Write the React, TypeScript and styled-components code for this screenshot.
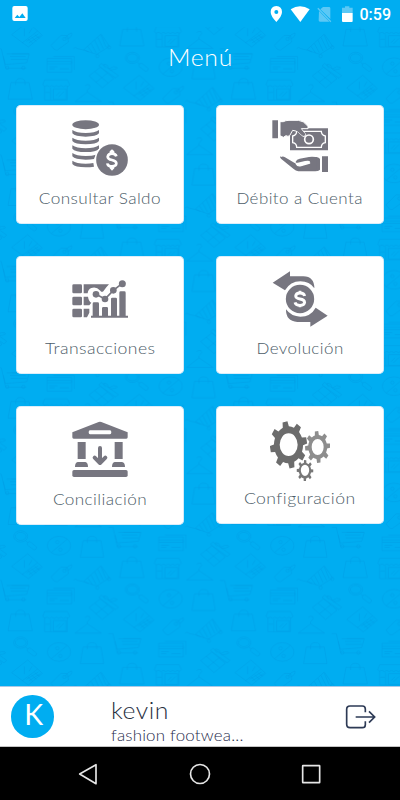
import React from "react";
import styled, { createGlobalStyle } from "styled-components";

const GlobalStyle = createGlobalStyle`
  * { box-sizing: border-box; }
  html, body { margin: 0; padding: 0; background: #00adf1; }
  body { font-family: Lato, "Open Sans", sans-serif; }
  svg { display: block; }
`;

const Screen = styled.div`
  position: relative;
  display: flex;
  flex-direction: column;
  width: 400px;
  height: 800px;
  overflow: hidden;
  background: #00adf1;
`;

const Wallpaper = styled.svg`
  position: absolute;
  top: 27px;
  left: 0;
`;

const StatusBar = styled.header`
  position: relative;
  height: 27px;
  display: flex;
  align-items: center;
  justify-content: space-between;
`;

const Clock = styled.span`
  margin-left: 6px;
  font: 500 16px/27px Roboto, sans-serif;
  color: #fff;
`;

const StatusGroup = styled.div`
  display: flex;
  align-items: center;
  padding: 1px 9px 0 0;
`;

const Stretch = styled.span<{ $x: number; $left?: boolean }>`
  display: inline-block;
  transform: scaleX(${(p) => p.$x});
  transform-origin: ${(p) => (p.$left ? "left" : "center")} center;
  white-space: nowrap;
`;

const Title = styled.h1`
  position: relative;
  margin: 0;
  height: 78px;
  padding: 15px 0 0;
  text-align: center;
  font-size: 22.5px;
  line-height: 32px;
  font-weight: 300;
  color: #fff;
  letter-spacing: 0.6px;
`;

const Menu = styled.main`
  position: relative;
  flex: 1;
  display: grid;
  grid-template-columns: 167.5px 167.5px;
  grid-template-rows: 118.5px 117.5px 118.5px;
  column-gap: 32.5px;
  row-gap: 32.5px;
  align-items: start;
  padding: 0.3px 0 0 16.2px;
`;

const Card = styled.button<{ $h: number }>`
  display: flex;
  flex-direction: column;
  align-items: center;
  height: ${(p) => p.$h}px;
  padding: 10.3px 0 0;
  border: 0;
  border-radius: 5px;
  background: #fff;
  box-shadow: inset 0 0 0 0.6px #b5dcf5;
  font-family: inherit;
`;

const CardIcon = styled.svg`
  width: 60px;
  height: 64px;
  flex: none;
`;

const CardLabel = styled.span<{ $gap: number }>`
  margin-top: ${(p) => p.$gap}px;
  font-size: 16px;
  line-height: 20px;
  font-weight: 300;
  color: #4c5c68;
  letter-spacing: 0.4px;
`;

const Account = styled.footer`
  position: relative;
  display: flex;
  height: 61px;
  background: #fff;
  border-top: 1px solid #a9c9e6;
  border-bottom: 1px solid #c4c4c4;
  color: #27303e;
`;

const Avatar = styled.div`
  width: 42.5px;
  height: 42.5px;
  margin: 8px 0 0 11px;
  padding-left: 3px;
  border-radius: 50%;
  background: #00adf1;
  color: #fff;
  text-align: center;
  font-size: 28.5px;
  line-height: 38px;
`;

const Identity = styled.div`
  width: 232px;
  padding: 10px 0 0 57.5px;
  font-weight: 300;
`;

const UserName = styled.div`
  font-size: 22.5px;
  line-height: 28px;
  letter-spacing: 0.5px;
`;

const Shop = styled.div`
  font-size: 16px;
  line-height: 20px;
  letter-spacing: 0.2px;
  color: #1f2c4c;
`;

const ExitButton = styled.svg`
  margin: 15px 0 0 58px;
`;

const NavBar = styled.nav`
  position: relative;
  height: 53px;
  display: flex;
  align-items: center;
  justify-content: space-between;
  padding: 0 77px 0 77px;
  background: #000;
`;

const Motifs = () => (
  <>
    <g>
      <ellipse cx="62" cy="49" rx="21" ry="17" />
      <ellipse cx="62" cy="49" rx="16" ry="12" />
      <path d="M76 62l8 6M84 67q4-4 9 0l17 14q0 8-8 9l-20-15q-2-5 2-8z" />
    </g>
    <g>
      <ellipse cx="177" cy="77" rx="35" ry="28" />
      <path d="M202 57l-48 40" />
      <circle cx="172" cy="66" r="5" />
      <circle cx="181" cy="89" r="5" />
    </g>
    <path d="M249 62h54l8 50h-70zM262 69V60q0-11 14-11t14 11v9" />
    <g>
      <path d="M325 22h14l13 58h62M345 44l6 25 64-5 8-27h-68M370 37h52M365 45h47M367 54h49" />
      <circle cx="357" cy="79" r="5" />
      <circle cx="405" cy="79" r="5" />
    </g>
    <path d="M476 51h74v41h-74zM476 60h74v7h-74M483 76h24M483 82h16M514 82h28M495 45h63v40" />
    <path d="M602 103l34-26 40 34-34 28zM619 90l41 35M657 95l-35 28M631 73l8-7 51 36-8 8zM652 80q-12-11-3-12t13 14q14-10 23-5t-20 9" />
    <g>
      <path d="M35 139l48-38 44 40-42 35zM66 164l47-36M73 120v24M96 120l-9 15" />
      <path d="M79 159l36-22M86 164l35-22M84 152l15 14M94 146l15 13M104 139l14 11" />
    </g>
    <g>
      <path d="M153 171l30-30 19 1 3 19-33 24q-8 3-19-14zM203 151q14-5 12-17-10 1-21 17" />
      <circle cx="193" cy="152" r="5" />
    </g>
    <g>
      <path d="M220 181q5-8 13 0l17 4 53-48 25 37-38 24-40-13M252 184l14 7M263 174l14 20M273 165l15 28M284 155l15 33M293 147l17 34M302 139l16 37" />
      <circle cx="292" cy="203" r="5" />
      <circle cx="327" cy="177" r="5" />
    </g>
    <path d="M368 123h54l10 50h-73zM382 131v-8q0-12 14-12t14 12v8" />
    <path d="M469 134v42h68v-42M469 115h68l7 14q-3 9-12 3-6 8-14 0-6 8-14 0-6 8-14 0-6 8-14 0-8 6-13-2zM487 176v-38M495 142h38v32h-38zM503 163l12-12M510 167l17-17M471 153h14" />
    <path d="M560 180l37-28 42 28zM597 152q-3-7 4-10 7-6 2-12-8-3-13 3" />
  </>
);

const Background = () => (
  <Wallpaper width="400" height="660" viewBox="0 27 400 660" aria-hidden>
    <defs>
      <pattern
        id="shopping"
        width="670"
        height="319"
        patternUnits="userSpaceOnUse"
        patternTransform="translate(0 520) scale(.33333)"
      >
        <g fill="none" stroke="#009be3" strokeWidth="2.6" strokeOpacity=".55">
          <Motifs />
          <g transform="translate(-670 0)"><Motifs /></g>
          <g transform="translate(335 159.5)"><Motifs /></g>
          <g transform="translate(-335 159.5)"><Motifs /></g>
          <g transform="translate(335 -159.5)"><Motifs /></g>
          <g transform="translate(-335 -159.5)"><Motifs /></g>
        </g>
      </pattern>
    </defs>
    <rect y="27" width="400" height="660" fill="url(#shopping)" />
  </Wallpaper>
);

const GREY = "#777680";

const Coins = () => (
  <g fill={GREY}>
    <ellipse cx="227" cy="73" rx="40" ry="13.5" />
    {[0, 23, 46].map((d) => (
      <path key={d} transform={`translate(0 ${d})`} d="M187 89q12 9 40 9t40-9v10q-8 10-40 10t-40-10z" />
    ))}
    <path d="M187 158q12 9 40 9 20 0 31-4l-6 13q-11 2-25 2-32 0-40-10z" />
    <path d="M187 181q12 9 40 9 14 0 23-2l2 11q-11 2-25 2-32 0-40-10z" />
    <circle cx="306" cy="179" r="52" fill="#fff" />
    <circle cx="306" cy="179" r="47.5" />
    <path d="M319 168q-2-8-13-8t-13 9q0 7 13 10t13 10q0 9-13 9t-14-9" fill="none" stroke="#fff" strokeWidth="8" />
    <path d="M306 147l7 6v9h-14v-9zM306 211l7-7v-9h-14v9z" fill="#fff" />
  </g>
);

const CashHands = () => (
  <g fill={GREY}>
    <path d="M187 60h17v54h-17zM336 168h18v47h-18z" />
    <path d="M240 84h114v66H240z" />
    <path d="M260 93h74q0 12 12 14v20q-12 2-12 14h-74q0-12-12-14v-20q12-2 12-14z" fill="none" stroke="#fff" strokeWidth="4" />
    <circle cx="297" cy="117" r="13" fill="none" stroke="#fff" strokeWidth="5" />
    <path
      d="M210 64h10q7-4 17-4h28q15 0 29 18v7h-20l13 17q0 8-8 6l-17-15-14-3-9 16q-5 4-11 0l-8 5-10-5z"
      stroke="#fff"
      strokeWidth="3"
    />
    <path d="M266 79l18 20q2 9-7 6l-23-18z" />
    <path d="M213 170q6-3 12 1l34 20q4 8 14 5l24-7q5-3 2-7-5-2-14 0l-22 5q-6 2-6-3 3-8 12-9l28-5q8-2 20 0h3l7 5v30q-5 6-10 8h-52q-8-1-14-7l-38-31q-5-4-1-8z" />
    <path d="M319 171q9 1 11 5v32q-4 4-11 5z" />
    <path d="M259 191q4 8 14 5l26-8" fill="none" stroke="#fff" strokeWidth="4" strokeLinecap="round" />
  </g>
);

const TableChart = () => (
  <g fill={GREY}>
    <rect x="187" y="102" width="29" height="27" rx="4" />
    <rect x="187" y="139" width="29" height="26" rx="4" />
    <rect x="187" y="175" width="29" height="26" rx="4" />
    <path d="M221 102h76l-8 9-9 12q-5 4-9-2-13-14-27-8-10 4-11 16h-12zM221 139h13q2 14 10 18l-6 8h-17zM221 175h17v12l-7 14h-10z" />
    <path d="M248 160q0-4 4-4h11q4 0 4 4v36h9v-22q0-4 4-4h10q4 0 4 4v22h9v-50q0-4 4-4h10q4 0 4 4v50h7v-69q0-4 4-4h11q4 0 4 4v69h7v6H243v-6h5z" />
    <path d="M258 132l27 14 25-26 27-21" fill="none" stroke={GREY} strokeWidth="5" />
    <circle cx="258" cy="132" r="10" />
    <circle cx="285" cy="146" r="10" />
    <circle cx="310" cy="120" r="10" />
    <circle cx="337" cy="100" r="10.5" />
  </g>
);

const Refund = () => (
  <g fill={GREY}>
    <path d="M188 97l52-34v15h40q33 1 33 36-14-21-42-21-30 0-46 27z" />
    <path d="M353 196l-52 33v-14h-39q-35-3-34-38 16 22 43 22 31 0 46-27z" />
    <circle cx="270" cy="146" r="42.5" />
    <path d="M284 137q-2-9-14-9t-13 9q0 7 13 9t14 10q-1 9-14 9t-15-9" fill="none" stroke="#fff" strokeWidth="8.5" />
    <path d="M266 121h8v9h-8zM266 163h8v8h-8z" fill="#fff" />
  </g>
);

const Bank = () => (
  <g fill={GREY}>
    <path
      fillRule="evenodd"
      d="M187 96l79-31q4-2 8 0l79 31v15q0 4-4 4H191q-4 0-4-4zM240 90q-4 0-4 6t4 6h60q4 0 4-6t-4-6z"
    />
    <path d="M203 125h24v51h-24zM314 125h24v51h-24z" />
    <path d="M203 185h23q8 1 8 15h-39q0-14 8-15zM314 185h22q9 1 9 15h-39q0-14 8-15z" />
    <rect x="187" y="209" width="166" height="21" rx="5" />
    <path d="M270 143v44M254 172l16 16 16-16" fill="none" stroke={GREY} strokeWidth="12" strokeLinecap="round" strokeLinejoin="round" />
  </g>
);

const gearOutline = (cx: number, cy: number, rx: number, ry: number, phase: number, root: number) => {
  const points: string[] = [];
  const step = Math.PI / 4;
  for (let i = 0; i < 8; i++) {
    [[-0.27, root], [-0.17, 1], [0.17, 1], [0.27, root], [0.5, root]].forEach(([offset, r]) => {
      const a = phase + (i + offset) * step;
      points.push(`${(cx + Math.cos(a) * rx * r).toFixed(1)} ${(cy + Math.sin(a) * ry * r).toFixed(1)}`);
    });
  }
  return `M${points.join("L")}Z`;
};

const hole = (cx: number, cy: number, rx: number, ry: number) =>
  `M${cx - rx} ${cy}a${rx} ${ry} 0 1 0 ${rx * 2} 0a${rx} ${ry} 0 1 0 ${-rx * 2} 0Z`;

const Gears = () => (
  <g fillRule="evenodd">
    <path fill="#6c6c6c" d={gearOutline(235.5, 133.5, 56, 71, -0.19, 0.78) + hole(236, 133, 27, 34)} />
    <path fill="#8d8d8d" d={gearOutline(323, 140, 38, 48, -0.09, 0.75) + hole(323, 140, 18, 24)} />
    <path fill="#777" d={gearOutline(285, 211, 25, 32, 0.02, 0.74) + hole(285, 210, 12.5, 17)} />
  </g>
);

const items = [
  { label: "Consultar Saldo", icon: <Coins />, top: 47, h: 118.5, gap: 8, stretch: 1.073 },
  { label: "Débito a Cuenta", icon: <CashHands />, top: 47, h: 118.5, gap: 8, stretch: 1.06 },
  { label: "Transacciones", icon: <TableChart />, top: 50, h: 117.5, gap: 7, stretch: 1.1 },
  { label: "Devolución", icon: <Refund />, top: 50, h: 117.5, gap: 7, stretch: 1.06 },
  { label: "Conciliación", icon: <Bank />, top: 50, h: 118.5, gap: 8, stretch: 1.07 },
  { label: "Configuración", icon: <Gears />, top: 50, h: 117.5, gap: 7, stretch: 1.1 },
];

export default function App() {
  return (
    <>
      <GlobalStyle />
      <Screen>
        <Background />
        <StatusBar>
          <svg width="40" height="27" viewBox="0 0 120 81">
            <path
              fill="#fff"
              fillRule="evenodd"
              d="M43 18h34q6 0 6 6v33q0 6-6 6H43q-6 0-6-6V24q0-6 6-6zM44 54h33L67 40l-9 11-6-7z"
            />
          </svg>
          <StatusGroup>
            <svg width="84" height="18" viewBox="811 12 252 54">
              <path fill="#fff" fillRule="evenodd" d="M830 15q17 1 17 18 0 12-17 30-17-18-17-30 0-17 17-18zM830 27a6 6 0 1 0 0 12a6 6 0 1 0 0-12z" />
              <path fill="#fff" d="M873 25q28-18 57 0l-28 38z" />
              <g fill="#5cc8f5">
                <path d="M970 18h18q4 0 4 4v32l-30-29zM958 30l31 32h-28q-4 0-4-4z" />
                <path d="M956 20l39 41-3 3-39-41z" />
                <path d="M1027 36V20h9v-4h13v4h10v16z" />
              </g>
              <path fill="#fff" d="M1027 36h32v24q0 3-3 3h-26q-3 0-3-3z" />
            </svg>
            <Clock>0:59</Clock>
          </StatusGroup>
        </StatusBar>
        <Title>
          <Stretch $x={1.1}>Menú</Stretch>
        </Title>
        <Menu>
          {items.map((item) => (
            <Card key={item.label} $h={item.h}>
              <CardIcon viewBox={`180 ${item.top} 180 192`}>{item.icon}</CardIcon>
              <CardLabel $gap={item.gap}>
                <Stretch $x={item.stretch}>{item.label}</Stretch>
              </CardLabel>
            </Card>
          ))}
        </Menu>
        <Account>
          <Avatar>K</Avatar>
          <Identity>
            <UserName>
              <Stretch $x={1.1} $left>kevin</Stretch>
            </UserName>
            <Shop>
              <Stretch $x={1.055} $left>fashion footwea...</Stretch>
            </Shop>
          </Identity>
          <ExitButton width="34" height="30" viewBox="1033 65 102 90">
            <g fill="none" stroke="#2d3a55" strokeWidth="5">
              <path d="M1097 96V86q0-9-9-9h-37q-10 0-10 10v45q0 10 10 10h37q9 0 9-9v-10" />
              <path d="M1068 110h56M1108 93l17 17-17 17" />
            </g>
          </ExitButton>
        </Account>
        <NavBar>
          <svg width="24" height="24" viewBox="234 244 72 72">
            <path d="M242 280l49-28v57z" fill="none" stroke="#e6e6e6" strokeWidth="5" strokeLinejoin="round" />
          </svg>
          <svg width="24" height="24" viewBox="564 244 72 72">
            <circle cx="600" cy="280" r="28.5" fill="none" stroke="#e6e6e6" strokeWidth="5" />
          </svg>
          <svg width="24" height="24" viewBox="897 244 72 72">
            <rect x="908" y="255" width="51" height="51" rx="1" fill="none" stroke="#e6e6e6" strokeWidth="5" />
          </svg>
        </NavBar>
      </Screen>
    </>
  );
}
